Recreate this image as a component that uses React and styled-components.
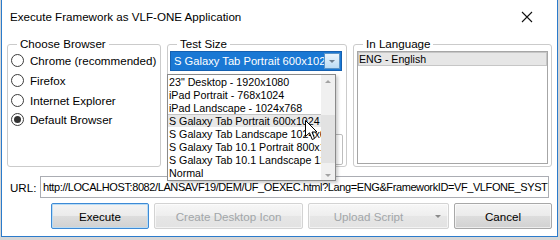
import React from "react";
import styled, { createGlobalStyle } from "styled-components";

const GlobalStyle = createGlobalStyle`
  html, body {
    margin: 0;
    padding: 0;
    background: #d6d6d6;
  }
  body {
    width: 560px;
    height: 240px;
    overflow: hidden;
    font-family: "Liberation Sans", Arial, sans-serif;
    color: #000;
  }
`;

const Window = styled.div`
  box-sizing: border-box;
  width: 557px;
  height: 237px;
  margin-left: 1px;
  background: #fff;
  border: 1px solid #2b7bcb;
  border-top: none;
  display: flex;
  flex-direction: column;
`;

const TitleBar = styled.div`
  height: 37px;
  box-sizing: border-box;
  padding: 10px 0 0 8px;
  display: flex;
  align-items: flex-start;
  justify-content: space-between;
`;

const Title = styled.div`
  font-size: 11.6px;
  line-height: 14px;
`;

const CloseButton = styled.div`
  width: 12px;
  height: 12px;
  margin: 1px 24px 0 0;
  display: flex;
`;

const Body = styled.div`
  padding: 0 5px;
  display: flex;
  flex-direction: column;
`;

const Groups = styled.div`
  display: flex;
  gap: 6px;
  height: 130px;
`;

const Group = styled.fieldset`
  box-sizing: border-box;
  margin: 0;
  padding: 0;
  width: ${(p) => p.$w}px;
  height: 130px;
  border: 1px solid #cbcbcb;
  border-radius: 3px;
  display: flex;
  flex-direction: column;
  position: relative;
  min-width: 0;
`;

const Legend = styled.legend`
  margin-left: 9px;
  padding: 0 3px;
  font-size: 11.6px;
  line-height: 14px;
`;

const RadioList = styled.div`
  display: flex;
  flex-direction: column;
  padding: 0 0 0 3px;
`;

const RadioRow = styled.div`
  height: 19.7px;
  display: flex;
  align-items: center;
  gap: 6px;
  font-size: 11.6px;
`;

const RadioCircle = styled.span`
  box-sizing: border-box;
  width: 13px;
  height: 13px;
  border-radius: 50%;
  border: 1px solid #3c3c3c;
  background: #fff;
  display: flex;
  align-items: center;
  justify-content: center;
  &::after {
    content: "";
    width: 7px;
    height: 7px;
    border-radius: 50%;
    background: ${(p) => (p.$checked ? "#333" : "transparent")};
  }
`;

const SizeBody = styled.div`
  flex: 1;
  display: flex;
  flex-direction: column;
  padding: 0 3px 1px 2px;
  position: relative;
`;

const Combo = styled.div`
  box-sizing: border-box;
  height: 20px;
  width: 172px;
  background: #1a78d4;
  border: 1px solid #1560b0;
  display: flex;
  align-items: center;
  padding: 0 1px 0 3px;
  position: relative;
`;

const ComboText = styled.div`
  flex: 1;
  color: #fff;
  font-size: 11.2px;
  white-space: nowrap;
  overflow: hidden;
`;

const ComboArrow = styled.div`
  box-sizing: border-box;
  width: 16px;
  height: 16px;
  border: 1px solid #5a93c6;
  background: linear-gradient(#eaf4fc, #bcdcf5);
  display: flex;
  align-items: center;
  justify-content: center;
`;

const Triangle = styled.span`
  width: 0;
  height: 0;
  border-left: 3px solid transparent;
  border-right: 3px solid transparent;
  border-${(p) => (p.$up ? "bottom" : "top")}: 3px solid ${(p) => p.$color || "#7a7a7a"};
`;

const Dropdown = styled.div`
  box-sizing: border-box;
  position: absolute;
  left: -4px;
  top: 22px;
  width: 169px;
  height: 107px;
  background: #fff;
  border: 1px solid #8a8a8a;
  box-shadow: 2px 2px 3px rgba(0, 0, 0, 0.2);
  display: flex;
  z-index: 5;
`;

const Options = styled.div`
  flex: 1;
  min-width: 0;
  display: flex;
  flex-direction: column;
`;

const Option = styled.div`
  box-sizing: border-box;
  height: 13px;
  line-height: 12px;
  font-size: 10.7px;
  padding-left: 1px;
  white-space: nowrap;
  overflow: hidden;
  background: ${(p) => (p.$hover ? "#e8e8e8" : "transparent")};
  border-top: 1px solid ${(p) => (p.$hover ? "#c4c4c4" : "transparent")};
`;

const ScrollBar = styled.div`
  width: 14px;
  background: #f0f0f0;
  display: flex;
  flex-direction: column;
  align-items: center;
  justify-content: space-between;
  padding: 5px 0 3px;
  box-sizing: border-box;
`;

const Thumb = styled.div`
  width: 14px;
  height: 48px;
  background: #e2e2e2;
  margin-top: 20px;
`;

const HiddenBox = styled.div`
  margin-top: auto;
  align-self: flex-end;
  width: 40px;
  height: 31px;
  box-sizing: border-box;
  border: 1px solid #bdbdbd;
  border-radius: 2px;
`;

const ListBox = styled.div`
  box-sizing: border-box;
  margin: 0 3px 2px 3px;
  flex: 1;
  border: 1px solid #a6a6a6;
  padding: 0;
`;

const ListItem = styled.div`
  box-sizing: border-box;
  height: 14px;
  line-height: 12px;
  font-size: 10.6px;
  padding-left: 0;
  background: #e6e6e6;
  border: 1px solid #c6c6c6;
`;

const UrlRow = styled.div`
  display: flex;
  align-items: center;
  margin-top: 9px;
  height: 22px;
`;

const UrlLabel = styled.div`
  width: 30px;
  padding-left: 3px;
  font-size: 11.6px;
`;

const UrlInput = styled.div`
  box-sizing: border-box;
  width: 509px;
  height: 22px;
  border: 1px solid #abadb3;
  padding: 0 0 0 2px;
  font-size: 11px;
  letter-spacing: -0.4px;
  line-height: 20px;
  white-space: nowrap;
  overflow: hidden;
`;

const ButtonRow = styled.div`
  display: flex;
  gap: 5px;
  margin-top: 5px;
  padding-left: 44px;
`;

const Button = styled.div`
  box-sizing: border-box;
  width: ${(p) => p.$w}px;
  height: 26px;
  border-radius: 2px;
  border: 1px solid ${(p) => (p.$focus ? "#3d8ad6" : p.$disabled ? "#d3d3d3" : "#a8a8a8")};
  background: ${(p) =>
    p.$disabled
      ? "linear-gradient(#f7f7f7, #eeeeee 50%, #e6e6e6 51%, #e2e2e2)"
      : "linear-gradient(#f3f3f3, #ebebeb 50%, #dddddd 51%, #d1d1d1)"};
  box-shadow: ${(p) => (p.$focus ? "inset 0 0 0 1px #b9dcf5" : "inset 0 0 0 1px rgba(255,255,255,0.6)")};
  color: ${(p) => (p.$disabled ? "#a2a6a9" : "#000")};
  font-size: 11.6px;
  display: flex;
  align-items: center;
  justify-content: center;
`;

const ButtonLabel = styled.span`
  flex: 1;
  text-align: center;
`;

const SplitArrow = styled.span`
  width: 20px;
  display: flex;
  justify-content: center;
`;

const Cursor = styled.svg`
  position: absolute;
  left: 137px;
  top: 69px;
  z-index: 10;
`;

const browsers = [
  { label: "Chrome (recommended)" },
  { label: "Firefox" },
  { label: "Internet Explorer" },
  { label: "Default Browser", checked: true },
];

const sizes = [
  '23" Desktop - 1920x1080',
  "iPad Portrait - 768x1024",
  "iPad Landscape - 1024x768",
  "S Galaxy Tab Portrait 600x1024",
  "S Galaxy Tab Landscape 1024x600",
  "S Galaxy Tab 10.1 Portrait 800x1280",
  "S Galaxy Tab 10.1 Landscape 1280x800",
  "Normal",
];

export default function App() {
  return (
    <>
      <GlobalStyle />
      <Window>
        <TitleBar>
          <Title>Execute Framework as VLF-ONE Application</Title>
          <CloseButton>
            <svg width="12" height="12" viewBox="0 0 12 12">
              <path d="M1 1 L11 11 M11 1 L1 11" stroke="#111" strokeWidth="1.1" />
            </svg>
          </CloseButton>
        </TitleBar>
        <Body>
          <Groups>
            <Group $w={154}>
              <Legend>Choose Browser</Legend>
              <RadioList>
                {browsers.map((b) => (
                  <RadioRow key={b.label}>
                    <RadioCircle $checked={b.checked} />
                    {b.label}
                  </RadioRow>
                ))}
              </RadioList>
            </Group>
            <Group $w={180}>
              <Legend>Test Size</Legend>
              <SizeBody>
                <Combo>
                  <ComboText>S Galaxy Tab Portrait 600x1024</ComboText>
                  <ComboArrow>
                    <Triangle $color="#6d7f90" />
                  </ComboArrow>
                  <Dropdown>
                    <Options>
                      {sizes.map((s, i) => (
                        <Option key={s} $hover={i === 3}>
                          {s}
                        </Option>
                      ))}
                    </Options>
                    <ScrollBar>
                      <Triangle $up $color="#a3a3a3" />
                      <Thumb />
                      <Triangle $color="#a3a3a3" />
                    </ScrollBar>
                  </Dropdown>
                </Combo>
                <HiddenBox />
                <Cursor width="13" height="21" viewBox="0 0 13 21">
                  <path
                    d="M0.5 0.5 L0.5 16.5 L4.5 12.8 L7.2 19.5 L9.6 18.5 L7 12 L12 12 Z"
                    fill="#fff"
                    stroke="#000"
                    strokeWidth="1"
                    strokeLinejoin="round"
                  />
                </Cursor>
              </SizeBody>
            </Group>
            <Group $w={199}>
              <Legend>In Language</Legend>
              <ListBox>
                <ListItem>ENG - English</ListItem>
              </ListBox>
            </Group>
          </Groups>
          <UrlRow>
            <UrlLabel>URL:</UrlLabel>
            <UrlInput>
              http://LOCALHOST:8082/LANSAVF19/DEM/UF_OEXEC.html?Lang=ENG&amp;FrameworkID=VF_VLFONE_SYSTEM&amp;Developer=Y
            </UrlInput>
          </UrlRow>
          <ButtonRow>
            <Button $w={98} $focus>
              Execute
            </Button>
            <Button $w={149} $disabled>
              Create Desktop Icon
            </Button>
            <Button $w={141} $disabled>
              <ButtonLabel>Upload Script</ButtonLabel>
              <SplitArrow>
                <Triangle $color="#8a8a8a" />
              </SplitArrow>
            </Button>
            <Button $w={98}>Cancel</Button>
          </ButtonRow>
        </Body>
      </Window>
    </>
  );
}
